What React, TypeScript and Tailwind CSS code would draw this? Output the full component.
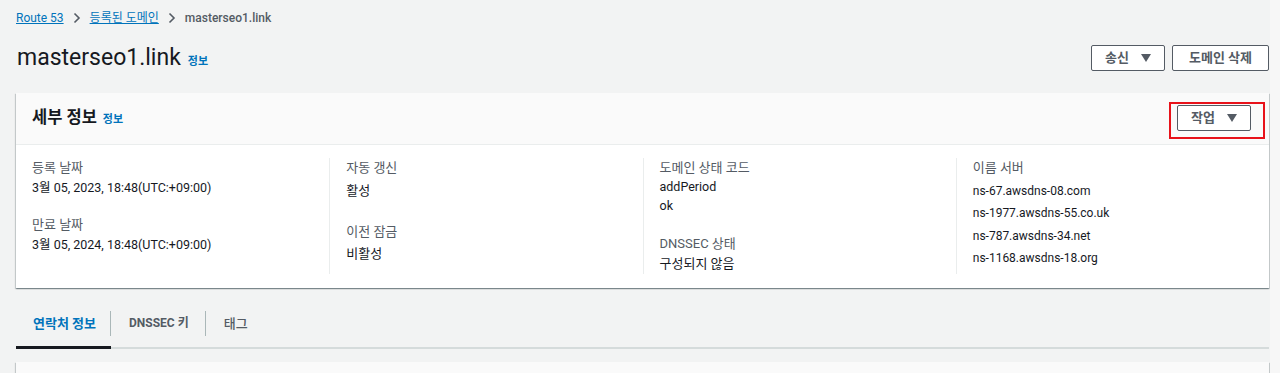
const font = { fontFamily: 'Roboto, "Noto Sans CJK KR", sans-serif' };

function Caret() {
  return (
    <svg width="10" height="8" viewBox="0 0 10 8" className="ml-3 fill-[#545b64]">
      <path d="M0 0h10L5 8z" />
    </svg>
  );
}

function Field({ label, value }: { label: string; value: string }) {
  return (
    <div className="mb-[17px]">
      <p className="text-[13px] leading-[20px] text-[#545b64]">{label}</p>
      <p className="text-[12.5px] leading-[20px] text-[#16191f]">{value}</p>
    </div>
  );
}

export default function App() {
  return (
    <div className="flex h-[373px] w-full overflow-hidden bg-[#f2f3f3]" style={font}>
      <div className="flex-1 pl-4 pr-[1px]">
        {/* breadcrumb */}
        <nav className="flex h-5 items-center pt-2 text-[12px] leading-5 box-content">
          <a className="text-[#0073bb] underline">Route 53</a>
          <svg width="8" height="12" viewBox="0 0 8 12" className="mx-[9px] stroke-[#545b64]" fill="none">
            <path d="M1.5 1.5 6 6l-4.5 4.5" strokeWidth="1.6" />
          </svg>
          <a className="text-[#0073bb] underline">등록된 도메인</a>
          <svg width="8" height="12" viewBox="0 0 8 12" className="mx-[9px] stroke-[#545b64]" fill="none">
            <path d="M1.5 1.5 6 6l-4.5 4.5" strokeWidth="1.6" />
          </svg>
          <span className="font-medium text-[#545b64]">masterseo1.link</span>
        </nav>

        {/* title row */}
        <div className="mt-4 flex h-[28px] items-center justify-between">
          <div className="flex items-baseline">
            <h1 className="pl-[1px] text-[23px] leading-[28px] text-[#16191f]">masterseo1.link</h1>
            <a className="ml-[7px] text-[11px] font-bold text-[#0073bb]">정보</a>
          </div>
          <div className="flex gap-[7px]">
            <button className="flex h-[26px] items-center rounded-[2px] border border-[#545b64] bg-white px-[13px] text-[13px] font-bold text-[#545b64]">
              송신
              <Caret />
            </button>
            <button className="h-[26px] rounded-[2px] border border-[#545b64] bg-white px-4 text-[13px] font-bold text-[#545b64]">
              도메인 삭제
            </button>
          </div>
        </div>

        {/* details card */}
        <section className="mt-[21px] bg-white shadow-[0_1px_1px_0_rgba(0,28,36,0.3),1px_1px_1px_0_rgba(0,28,36,0.15),-1px_1px_1px_0_rgba(0,28,36,0.15)]">
          <header className="flex h-[52px] items-center justify-between border-b border-[#eaeded] bg-[#fafafa] pl-4 pr-[4px]">
            <div className="flex items-baseline">
              <h2 className="text-[16.5px] font-bold text-[#16191f]">세부 정보</h2>
              <a className="ml-[6px] text-[11px] font-bold text-[#0073bb]">정보</a>
            </div>
            <div className="mt-[4px] border-2 border-[#e8121a] pb-[6px] pl-[6px] pr-[12px] pt-[1px]">
              <button className="flex h-[26px] items-center rounded-[2px] border border-[#545b64] bg-white px-[13px] text-[13px] font-bold text-[#545b64]">
                작업
                <Caret />
              </button>
            </div>
          </header>
          <div className="grid h-[143px] grid-cols-4 pt-[13px]">
            <div className="pl-4">
              <Field label="등록 날짜" value="3월 05, 2023, 18:48(UTC:+09:00)" />
              <Field label="만료 날짜" value="3월 05, 2024, 18:48(UTC:+09:00)" />
            </div>
            <div className="mb-[16px] border-l border-[#eaeded] pl-4">
              <p className="text-[13px] leading-[20px] text-[#545b64]">자동 갱신</p>
              <p className="mt-[3px] text-[13px] leading-[20px] text-[#16191f]">활성</p>
              <p className="mt-[21px] text-[13px] leading-[20px] text-[#545b64]">이전 잠금</p>
              <p className="mt-[2px] text-[13px] leading-[20px] text-[#16191f]">비활성</p>
            </div>
            <div className="mb-[16px] border-l border-[#eaeded] pl-4">
              <p className="text-[13px] leading-[20px] text-[#545b64]">도메인 상태 코드</p>
              <p className="text-[12.5px] leading-[18px] text-[#16191f]">addPeriod</p>
              <p className="text-[12.5px] leading-[20px] text-[#16191f]">ok</p>
              <p className="mt-[18px] text-[13px] leading-[20px] text-[#545b64]">DNSSEC 상태</p>
              <p className="text-[13px] leading-[20px] text-[#16191f]">구성되지 않음</p>
            </div>
            <div className="mb-[16px] border-l border-[#eaeded] pl-4">
              <p className="text-[13px] leading-[20px] text-[#545b64]">이름 서버</p>
              {['ns-67.awsdns-08.com', 'ns-1977.awsdns-55.co.uk', 'ns-787.awsdns-34.net', 'ns-1168.awsdns-18.org'].map((ns) => (
                <p key={ns} className="mt-[2.5px] text-[12px] leading-[20px] text-[#16191f]">
                  {ns}
                </p>
              ))}
            </div>
          </div>
        </section>

        {/* tabs */}
        <div className="mt-3 flex h-[49px] border-b-2 border-[#d5dbdb] box-border">
          <div className="-mb-[2px] flex w-[95px] items-center border-b-[3px] border-[#16191f] pl-[17px]">
            <span className="w-full border-r border-[#aab7b8] text-[13px] font-bold leading-[25px] text-[#0073bb]">연락처 정보</span>
          </div>
          <div className="flex items-center pl-[18px]">
            <span className="border-r border-[#aab7b8] pr-[16px] text-[12px] font-bold leading-[25px] text-[#545b64]">DNSSEC 키</span>
          </div>
          <div className="flex items-center pl-[18px]">
            <span className="text-[13px] font-medium leading-[25px] text-[#545b64]">태그</span>
          </div>
        </div>

        <div className="mt-[13px] h-10 bg-[#fafafa] shadow-[0_1px_1px_0_rgba(0,28,36,0.3),1px_1px_1px_0_rgba(0,28,36,0.15),-1px_1px_1px_0_rgba(0,28,36,0.15)]" />
      </div>
      <div className="w-[10px] bg-[#f7f7f7]" />
    </div>
  );
}
